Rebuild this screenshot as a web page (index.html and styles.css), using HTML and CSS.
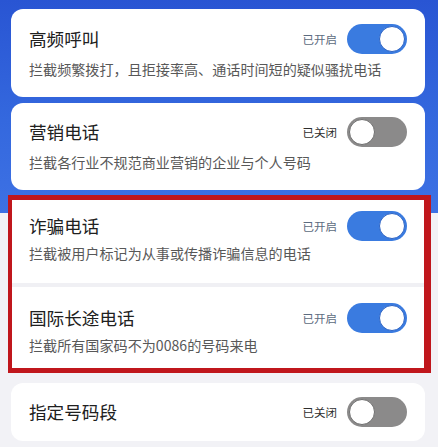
FILE: index.html
```html
<!DOCTYPE html>
<html lang="zh-CN">
<head>
<meta charset="utf-8">
<title>拦截设置</title>
<link rel="stylesheet" href="styles.css">
</head>
<body>
<main class="list">
  <section class="card card-a">
    <div class="row">
      <h2 class="title">高频呼叫</h2>
      <div class="ctrl"><span class="state on">已开启</span><span class="switch is-on"><span class="knob"></span></span></div>
    </div>
    <p class="desc">拦截频繁拨打，且拒接率高、通话时间短的疑似骚扰电话</p>
  </section>

  <section class="card card-b">
    <div class="row">
      <h2 class="title">营销电话</h2>
      <div class="ctrl"><span class="state">已关闭</span><span class="switch"><span class="knob"></span></span></div>
    </div>
    <p class="desc">拦截各行业不规范商业营销的企业与个人号码</p>
  </section>

  <div class="highlight">
    <section class="card card-c">
      <div class="row">
        <h2 class="title">诈骗电话</h2>
        <div class="ctrl"><span class="state on">已开启</span><span class="switch is-on"><span class="knob"></span></span></div>
      </div>
      <p class="desc">拦截被用户标记为从事或传播诈骗信息的电话</p>
    </section>
    <section class="card card-d">
      <div class="row">
        <h2 class="title">国际长途电话</h2>
        <div class="ctrl"><span class="state on">已开启</span><span class="switch is-on"><span class="knob"></span></span></div>
      </div>
      <p class="desc">拦截所有国家码不为0086的号码来电</p>
    </section>
  </div>

  <section class="card card-e">
    <div class="row">
      <h2 class="title">指定号码段</h2>
      <div class="ctrl"><span class="state">已关闭</span><span class="switch"><span class="knob"></span></span></div>
    </div>
  </section>
</main>
</body>
</html>
```
FILE: styles.css
```css
html, body {
  margin: 0;
  padding: 0;
}

body {
  width: 438px;
  height: 447px;
  overflow: hidden;
  font-family: "Noto Sans CJK SC", "Noto Sans", sans-serif;
  text-spacing-trim: space-all;
  background: linear-gradient(180deg, #2955d3 0, #3468de 120px, #3d71e4 213px, #f2f2f6 213px, #f2f2f6 100%);
}

.list {
  display: flex;
  flex-direction: column;
  padding: 9px 13px 0 11px;
}

.card {
  background: #fff;
  border-radius: 12px;
  padding: 15px 18px 18px 18px;
}

.card-a { margin-bottom: 6px; height: 88px; box-sizing: border-box; }
.card-b { padding-top: 14px; height: 87px; box-sizing: border-box; }
.card-c { padding: 11px 17px 0 17px; height: 83px; box-sizing: border-box; border-radius: 0; }
.card-c .desc { margin-top: 2px; }
.card-d { padding: 16px 17px 0 17px; height: 81px; box-sizing: border-box; border-radius: 0; }
.card-d .desc { margin-top: 2px; }
.card-e { padding: 14px 18px; height: 58px; box-sizing: border-box; margin-top: 10px; }

/* red frame around the two emphasised rules */
.highlight {
  margin: 5px -6px 0 -3px;
  border-style: solid;
  border-color: #c0161c;
  border-width: 5px 7px 5px 4px;
  background: #f0f0f4;
  display: flex;
  flex-direction: column;
  gap: 4px;
}

.row {
  display: flex;
  align-items: center;
  justify-content: space-between;
  height: 30px;
}

.title {
  margin: 0;
  font-size: 17.6px;
  font-weight: 400;
  color: #202020;
  line-height: 24px;
}

.desc {
  margin: 5px 0 0 0;
  font-size: 14.1px;
  font-weight: 400;
  line-height: 20px;
  color: #585858;
  white-space: nowrap;
}

.ctrl {
  display: flex;
  align-items: center;
  gap: 10px;
}

.state {
  font-size: 11.5px;
  color: #2e2e2e;
  line-height: 16px;
}

.state.on {
  color: #5c6b80;
}

.switch {
  width: 60px;
  height: 30px;
  box-sizing: border-box;
  border-radius: 15px;
  background: #8b8a8a;
  display: flex;
  align-items: center;
  justify-content: flex-start;
  padding: 2px;
}

.switch .knob {
  width: 26px;
  height: 26px;
  box-sizing: border-box;
  border-radius: 50%;
  background: #fff;
  border: 1.5px solid #6f6f6f;
}

.switch.is-on {
  background: #3a7be0;
  justify-content: flex-end;
}

.switch.is-on .knob {
  border-color: #2c63c4;
}
```
